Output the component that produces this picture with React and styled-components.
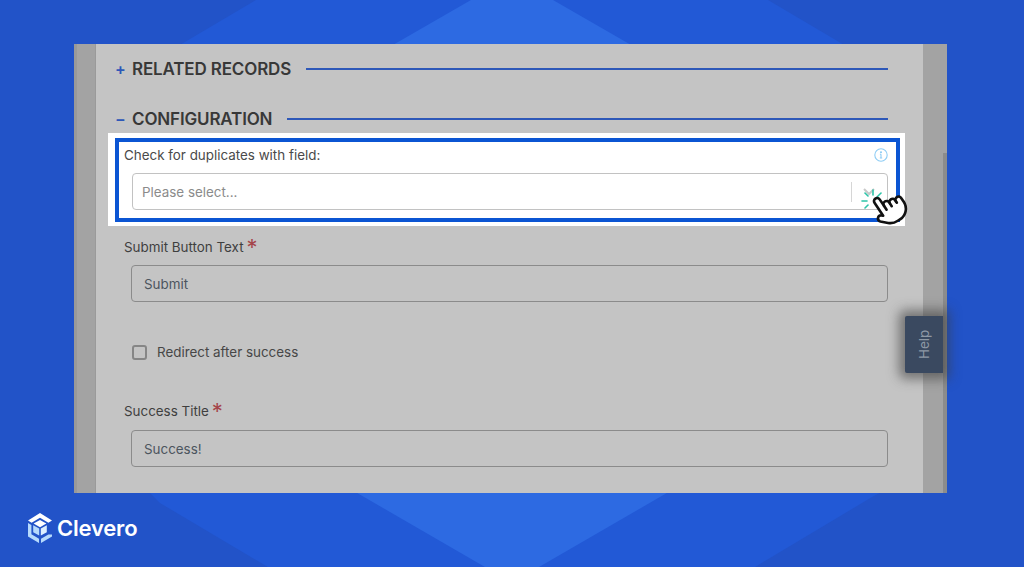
import React from 'react'
import styled, { createGlobalStyle } from 'styled-components'

const GlobalStyle = createGlobalStyle`
  html, body {
    margin: 0;
    padding: 0;
    height: 100%;
    overflow: hidden;
    background: #2253c8;
    font-family: "Inter", "Liberation Sans", sans-serif;
  }
  * { box-sizing: border-box; }
`

const Page = styled.div`
  position: relative;
  width: 1024px;
  height: 567px;
  overflow: hidden;
  padding-top: 44px;
  background: #2253c8;
`
const Backdrop = styled.svg`
  position: absolute;
  inset: 0;
`
const Frame = styled.div`
  position: relative;
  display: grid;
  grid-template-columns: 22px 827px 24px;
  width: 873px;
  height: 449px;
  margin-left: 74px;
  background: #c4c4c4;
`
const Gutter = styled.div`
  background: #a3a3a3;
  border-left: ${({ $left }) => ($left ? '3px solid #999' : 'none')};
  border-right: ${({ $left }) => ($left ? '1px solid #9a9a9a' : 'none')};
`
const ScrollThumb = styled.div`
  position: absolute;
  right: 0;
  top: 109px;
  bottom: 0;
  width: 4px;
  background: #8c8c8c;
`
const Main = styled.div`
  padding-top: 13px;
  overflow: hidden;
`
const SectionRow = styled.div`
  display: flex;
  align-items: center;
  height: 24px;
  margin: 0 35px 26px 19px;
  &:nth-child(2) { margin-bottom: 2px; }
`
const Toggle = styled.span`
  width: 17px;
  color: #2e58b8;
  font-size: 16px;
  font-weight: 600;
  line-height: 24px;
`
const SectionTitle = styled.span`
  color: #383838;
  font-size: 17px;
  font-weight: 600;
  letter-spacing: -0.15px;
  white-space: nowrap;
`
const Rule = styled.span`
  flex: 1;
  height: 2px;
  margin-left: 15px;
  background: #2e58b8;
`
const Highlight = styled.div`
  position: relative;
  width: 797px;
  height: 93px;
  margin-left: 12px;
  padding: 5px 5px 4px 7px;
  background: #fff;
`
const HighlightBorder = styled.div`
  height: 100%;
  padding: 4px 8px 0 5px;
  border: 4px solid #0b55d3;
`
const LabelRow = styled.div`
  display: flex;
  align-items: center;
  justify-content: space-between;
  height: 18px;
`
const Label = styled.label`
  display: flex;
  gap: 3px;
  color: ${({ $bright }) => ($bright ? '#4a4a4a' : '#3f3f3f')};
  font-size: 13.4px;
  line-height: 18px;
  white-space: nowrap;
`
const Star = styled.span`
  color: #a5444a;
  font-size: 22px;
  line-height: 18px;
  height: 14px;
`
const Select = styled.div`
  display: flex;
  align-items: center;
  justify-content: space-between;
  height: 37px;
  margin: 9px 0 0 8px;
  padding: 0 11px 0 9px;
  width: 756px;
  border: 1px solid #c2c2c2;
  border-radius: 4px;
  color: #8b8b8b;
  font-size: 13.4px;
`
const SelectRight = styled.div`
  display: flex;
  align-items: center;
  gap: 10px;
  height: 20px;
`
const Divider = styled.span`
  width: 1px;
  height: 20px;
  background: #d6d6d6;
`
const PointerMark = styled.svg`
  position: absolute;
  left: 751px;
  top: 53px;
  overflow: visible;
`
const Field = styled.div`
  margin: ${({ $top }) => $top}px 35px 0 28px;
`
const TextInput = styled.div`
  display: flex;
  align-items: center;
  width: 757px;
  height: 37px;
  margin: ${({ $gap }) => $gap}px 0 0 7px;
  padding-left: 12px;
  border: 1px solid #8b8b8b;
  border-radius: 4px;
  color: #4c555e;
  font-size: 13.4px;
`
const CheckRow = styled.div`
  display: flex;
  align-items: center;
  gap: 10px;
  height: 18px;
  margin: 41px 0 0 36px;
  color: #474747;
  font-size: 13.4px;
`
const Box = styled.span`
  width: 15px;
  height: 15px;
  border: 2px solid #868686;
  border-radius: 3px;
`
const HelpTab = styled.div`
  position: absolute;
  left: 831px;
  top: 272px;
  display: flex;
  align-items: center;
  justify-content: center;
  width: 38px;
  height: 57px;
  padding-top: 1px;
  background: #3a4960;
  border-radius: 0 2px 2px 0;
  box-shadow: 0 0 12px 6px rgba(60, 60, 60, 0.6);
  color: #8e98a5;
  font-size: 13.4px;
  writing-mode: vertical-rl;
  transform: rotate(180deg);
`
const Logo = styled.div`
  position: absolute;
  left: 27px;
  top: 512px;
  display: flex;
  align-items: center;
  gap: 4px;
  color: #fff;
  font-size: 22px;
  font-weight: 600;
  letter-spacing: -0.2px;
`

function Background() {
  return (
    <Backdrop width="1024" height="567" viewBox="0 0 1024 567">
      <polygon points="256,0 768,0 900,78 900,482 872,497 755,567 268,567 160,503 150,493 124,482 124,78" fill="#2259d6" />
      <polygon points="471,0 553,0 900,200 900,358 539,567 485,567 124,358 124,200" fill="#2d6ae2" />
    </Backdrop>
  )
}

function Pointer() {
  return (
    <PointerMark width="46" height="46" viewBox="0 0 46 46">
      <g stroke="#2cc4a8" strokeWidth="1.6" strokeLinecap="round">
        <line x1="3" y1="15" x2="8" y2="15" />
        <line x1="6" y1="7" x2="9" y2="10" />
        <line x1="14" y1="4" x2="14" y2="9" />
        <line x1="22" y1="7" x2="18" y2="11" />
        <line x1="6" y1="22" x2="9" y2="19" />
      </g>
      <g transform="translate(12 6) rotate(-34 14 18) scale(1.55)" fill="#fff" stroke="#111" strokeWidth="1.7" strokeLinejoin="round" strokeLinecap="round">
        <path d="M6 14V4a2 2 0 0 1 4 0v5a2 2 0 0 1 4 0v1a2 2 0 0 1 4 0v1a2 2 0 1 1 4 0v3a8 8 0 0 1-8 8h-2c-2.8 0-4.5-.86-5.99-2.34l-3.6-3.6a2 2 0 0 1 2.83-2.82z" />
        <path d="M10 9v3M14 10v2M18 11v1" fill="none" />
      </g>
    </PointerMark>
  )
}

function LogoMark() {
  return (
    <svg width="26" height="32" viewBox="0 0 26 32">
      <path d="M1 8.5 13 1l12 7.5-3.6 2.3L13 5.8 4.6 10.8z" fill="#fff" />
      <path d="M1 11v13.5L12 31v-4.2L4.4 22.3V13z" fill="#b6dafc" />
      <path d="M25 22.5v2L14 31v-4.2l7.4-4.4z" fill="#b6dafc" />
      <path d="M13 8l6.4 3.6L13 15.2l-6.4-3.6z" fill="#fff" />
      <path d="M6.2 13.2l6 3.4v7l-6-3.4z" fill="#b6dafc" />
      <path d="M19.8 13.2l-6 3.4v7l6-3.4z" fill="#dcefff" />
    </svg>
  )
}

export default function App() {
  return (
    <>
      <GlobalStyle />
      <Page>
        <Background />
        <Frame>
          <Gutter $left />
          <Main>
            <SectionRow>
              <Toggle>+</Toggle>
              <SectionTitle>RELATED RECORDS</SectionTitle>
              <Rule />
            </SectionRow>
            <SectionRow>
              <Toggle>−</Toggle>
              <SectionTitle>CONFIGURATION</SectionTitle>
              <Rule />
            </SectionRow>
            <Highlight>
              <HighlightBorder>
                <LabelRow>
                  <Label $bright>Check for duplicates with field:</Label>
                  <svg width="14" height="14" viewBox="0 0 14 14" fill="none" stroke="#8fcdf5" strokeWidth="1.1">
                    <circle cx="7" cy="7" r="6.2" />
                    <path d="M7 6.2v3.8M5.8 10h2.4M5.9 6.2H7" />
                    <circle cx="7" cy="4.2" r="0.5" fill="#8fcdf5" />
                  </svg>
                </LabelRow>
                <Select>
                  Please select...
                  <SelectRight>
                    <Divider />
                    <svg width="14" height="14" viewBox="0 0 14 14" fill="none" stroke="#c9c9c9" strokeWidth="2">
                      <path d="M2 4l5 5 5-5" />
                    </svg>
                  </SelectRight>
                </Select>
              </HighlightBorder>
              <Pointer />
            </Highlight>
            <Field $top={12}>
              <Label>Submit Button Text<Star>*</Star></Label>
              <TextInput $gap={9}>Submit</TextInput>
            </Field>
            <CheckRow><Box />Redirect after success</CheckRow>
            <Field $top={41}>
              <Label>Success Title<Star>*</Star></Label>
              <TextInput $gap={10}>Success!</TextInput>
            </Field>
          </Main>
          <Gutter />
          <ScrollThumb />
          <HelpTab>Help</HelpTab>
        </Frame>
        <Logo>
          <LogoMark />
          Clevero
        </Logo>
      </Page>
    </>
  )
}
